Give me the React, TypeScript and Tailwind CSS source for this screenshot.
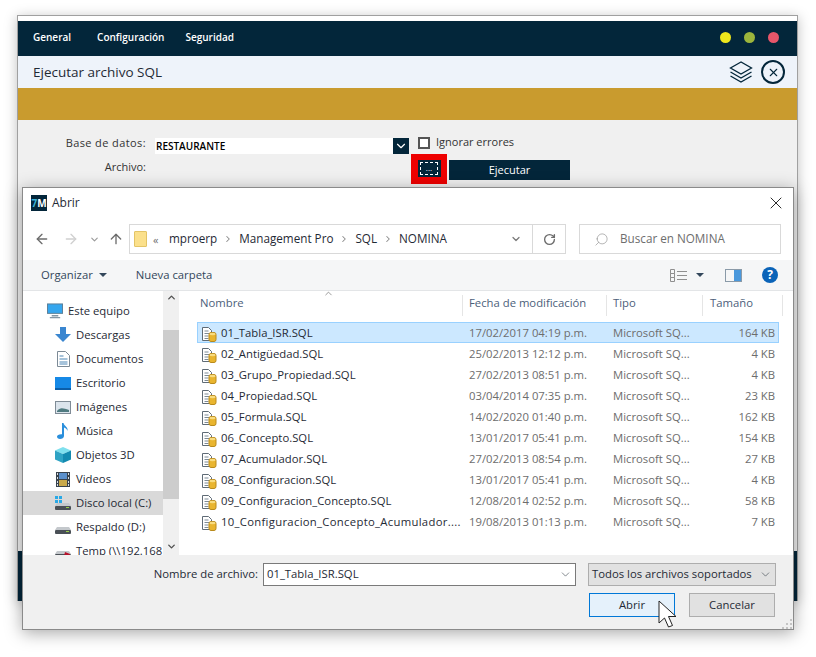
import { ArrowLeft, ArrowRight, ArrowUp, ChevronDown, ChevronRight, ChevronUp, RotateCw, Search, X } from 'lucide-react'

const files = [
  ['01_Tabla_ISR.SQL', '17/02/2017 04:19 p.m.', '164 KB'],
  ['02_Antigüedad.SQL', '25/02/2013 12:12 p.m.', '4 KB'],
  ['03_Grupo_Propiedad.SQL', '27/02/2013 08:51 p.m.', '4 KB'],
  ['04_Propiedad.SQL', '03/04/2014 07:35 p.m.', '23 KB'],
  ['05_Formula.SQL', '14/02/2020 01:40 p.m.', '162 KB'],
  ['06_Concepto.SQL', '13/01/2017 05:41 p.m.', '154 KB'],
  ['07_Acumulador.SQL', '27/02/2013 08:54 p.m.', '27 KB'],
  ['08_Configuracion.SQL', '13/01/2017 05:41 p.m.', '4 KB'],
  ['09_Configuracion_Concepto.SQL', '12/08/2014 02:52 p.m.', '58 KB'],
  ['10_Configuracion_Concepto_Acumulador....', '19/08/2013 01:13 p.m.', '7 KB'],
]

function SqlIcon() {
  return (
    <svg width="16" height="16" viewBox="0 0 16 16" className="shrink-0">
      <path d="M1.5 1.5h6l3 3v10h-9z" fill="#fff" stroke="#5f6b76" />
      <path d="M3.5 5h4M3.5 7.5h5M3.5 10h4M3.5 12.5h4" stroke="#7d8a96" />
      <rect x="8" y="6.500" width="7" height="9" rx="2" fill="#e9b52f" stroke="#b98a1c" />
      <ellipse cx="11.5" cy="8" rx="3" ry="1.300" fill="#f8dc80" />
    </svg>
  )
}

function NavIcon({ name }: { name: string }) {
  if (name === 'pc')
    return (
      <svg width="17" height="16" viewBox="0 0 17 16">
        <rect x="0.5" y="0.5" width="16" height="10" fill="#35a6ee" stroke="#5a7d95" />
        <path d="M5 13h7M3 15h11" stroke="#8497a5" strokeWidth="1.5" />
      </svg>
    )
  if (name === 'down')
    return (
      <svg width="16" height="16" viewBox="0 0 16 16">
        <path d="M5 0h6v7h5l-8 8-8-8h5z" fill="#3a86d0" />
      </svg>
    )
  if (name === 'doc')
    return (
      <svg width="13" height="16" viewBox="0 0 13 16">
        <path d="M0.500 0.500h8l4 4v11h-12z" fill="#fff" stroke="#7c8a96" />
        <path d="M2.500 5h4M2.500 8h8M2.500 11h8M2.500 13h8" stroke="#4c86b5" />
      </svg>
    )
  if (name === 'desk')
    return (
      <svg width="16" height="13" viewBox="0 0 16 13">
        <rect width="16" height="12" fill="#1689e6" />
        <rect y="11" width="16" height="2" fill="#0b5ea8" />
      </svg>
    )
  if (name === 'img')
    return (
      <svg width="16" height="13" viewBox="0 0 16 13">
        <rect x="0.5" y="0.5" width="15" height="12" fill="#dbe4ec" stroke="#7f8b96" />
        <path d="M2 10c3-4 6-3 12-1v2H2z" fill="#4f7a80" />
      </svg>
    )
  if (name === 'music')
    return (
      <svg width="12" height="16" viewBox="0 0 12 16">
        <path d="M5 0h1.500c.5 3 5 4 4 8-.5-2-2-3-3.500-3.500V13c0 2-2 3-4 3s-3-1-3-2.500S2 11 5 11.200z" fill="#2a8fdc" />
      </svg>
    )
  if (name === 'cube')
    return (
      <svg width="16" height="16" viewBox="0 0 16 16">
        <path d="M8 0l8 3.500-8 3.500-8-3.500z" fill="#7fe0ee" />
        <path d="M0 3.500l8 3.500v9l-8-3.500z" fill="#2ea3c4" />
        <path d="M16 3.500l-8 3.500v9l8-3.500z" fill="#138ab0" />
      </svg>
    )
  if (name === 'film')
    return (
      <svg width="14" height="15" viewBox="0 0 14 15">
        <rect width="14" height="15" fill="#38424c" />
        <path d="M1 1h1v2H1zM1 5h1v2H1zM1 9h1v2H1zM1 12h1v2H1zM12 1h1v2h-1zM12 5h1v2h-1zM12 9h1v2h-1zM12 12h1v2h-1z" fill="#d8dde2" />
        <rect x="3" y="1" width="8" height="6" fill="#5b90cc" />
        <rect x="3" y="8" width="8" height="6" fill="#c9a94a" />
      </svg>
    )
  return (
    <svg width="16" height="16" viewBox="0 0 16 16">
      {name === 'c' && <path d="M0 1h3v3H0zM4 1h3v3H4zM0 5h3v3H0zM4 5h3v3H4z" fill="#29a9e6" />}
      <path d="M2 8h12l2 3H0z" fill="#c4c8cc" />
      <rect y="11" width="16" height="4" rx="1" fill="#4a5056" />
      <rect x="11" y="12" width="3" height="1" fill="#9ad04a" />
      {name === 'net' && <path d="M10 9l5 2-1 4-5-2z" fill="#b8122c" />}
    </svg>
  )
}

const places = [
  ['pc', 'Este equipo'],
  ['down', 'Descargas'],
  ['doc', 'Documentos'],
  ['desk', 'Escritorio'],
  ['img', 'Imágenes'],
  ['music', 'Música'],
  ['cube', 'Objetos 3D'],
  ['film', 'Videos'],
  ['c', 'Disco local (C:)'],
  ['disk', 'Respaldo (D:)'],
  ['net', 'Temp (\\\\192.168'],
]

function OpenDialog() {
  return (
    <div className="absolute left-[22px] top-[187px] w-[772px] h-[443px] flex flex-col bg-white border border-[#8a8a8a] shadow-[0_3px_16px_rgba(0,0,0,0.35)] text-[11.3px] text-[#1f2a35] font-['Open_Sans',sans-serif]">
      <div className="h-[30px] shrink-0 flex items-center pl-[8px] pr-[7px] text-[12px]">
        <div className="w-[16px] h-[16px] bg-[#03263a] text-white text-[10px] leading-[16px] text-center font-bold whitespace-nowrap overflow-hidden">
          <span className="text-[#3bb3d8]">7</span>M
        </div>
        <span className="ml-[5px]">Abrir</span>
        <X size={20} strokeWidth={1} className="ml-auto text-black" />
      </div>
      <div className="h-[42px] shrink-0 flex items-center pl-[11px] pr-[12px]">
        <ArrowLeft size={16} className="text-[#6c6c6c]" />
        <ArrowRight size={16} className="ml-[13px] text-[#d0d0d0]" />
        <ChevronDown size={11} strokeWidth={2.5} className="ml-[10px] text-[#9a9a9a]" />
        <ArrowUp size={16} className="ml-[8px] text-[#6c6c6c]" />
        <div className="ml-[5px] w-[437px] h-[30px] flex items-center border border-[#d9d9d9] text-[11.7px]">
          <div className="ml-[4px] w-[13px] h-[16px] bg-[#fbe08b] border border-[#e3c466] rounded-[1px]" />
          <span className="ml-[6px] w-[9px] text-[#6d6d6d] text-[11px] leading-none">«</span>
          <span className="ml-[7px]">mproerp</span>
          <ChevronRight size={10} strokeWidth={2.5} className="mx-[6px] text-[#8a8a8a]" />
          <span>Management Pro</span>
          <ChevronRight size={10} strokeWidth={2.5} className="mx-[6px] text-[#8a8a8a]" />
          <span>SQL</span>
          <ChevronRight size={10} strokeWidth={2.5} className="mx-[6px] text-[#8a8a8a]" />
          <span>NOMINA</span>
          <ChevronDown size={12} strokeWidth={2.5} className="ml-auto mr-[10px] text-[#7a7a7a]" />
          <div className="w-[33px] h-full flex items-center justify-center border-l border-[#d9d9d9]">
            <RotateCw size={13} strokeWidth={2.5} className="text-[#6c6c6c]" />
          </div>
        </div>
        <div className="ml-[13px] flex-1 h-[30px] flex items-center border border-[#d9d9d9] text-[#6d6d6d] text-[11.7px]">
          <Search size={15} strokeWidth={1} className="ml-[14px] -scale-x-100 text-[#8a8a8a]" />
          <span className="ml-[11px]">Buscar en NOMINA</span>
        </div>
      </div>
      <div className="h-[31px] shrink-0 flex items-center bg-[#f5f6f7] border-b border-[#e3e5e7] pl-[18px] pr-[15px] text-[#33475b]">
        <span>Organizar</span>
        <span className="ml-[6px] w-0 h-0 border-x-[4px] border-x-transparent border-t-[4px] border-t-[#33475b]" />
        <span className="ml-[29px]">Nueva carpeta</span>
        <svg width="17" height="13" viewBox="0 0 17 13" fill="none" stroke="#8f8f8f" className="ml-auto">
          <path d="M0.500 0.500h4v4h-4zM0.500 4.500h4v4h-4zM0.500 8.500h4v4h-4zM7 2.500h10M7 6.500h10M7 10.500h10" />
        </svg>
        <span className="ml-[9px] w-0 h-0 border-x-[4px] border-x-transparent border-t-[4px] border-t-[#33475b]" />
        <div className="ml-[21px] w-[17px] h-[13px] border border-[#8a9aa8] flex justify-end">
          <span className="w-[7px] bg-[#4a98dc]" />
        </div>
        <div className="ml-[20px] w-[16px] h-[16px] rounded-full bg-[#0a63b8] text-white text-[12px] leading-[16px] text-center font-bold">?</div>
      </div>
      <div className="flex-1 flex min-h-0">
        <div className="w-[140px] shrink-0 overflow-hidden pt-[8px]">
          {places.map(([icon, label], i) => (
            <div key={label} className={`h-[24px] flex items-center whitespace-nowrap ${i === 0 ? 'pl-[24px]' : 'pl-[32px]'} ${label === 'Disco local (C:)' ? 'bg-[#d9d9d9]' : ''}`}>
              <span className="w-[16px] flex justify-center"><NavIcon name={icon} /></span>
              <span className="ml-[5px]">{label}</span>
            </div>
          ))}
        </div>
        <div className="w-[16px] shrink-0 flex flex-col items-center justify-between bg-[#f0f0f0] text-[#505050] relative">
          <ChevronUp size={11} strokeWidth={3} className="mt-[1px]" />
          <div className="absolute left-0 top-[39px] w-full h-[169px] bg-[#cdcdcd]" />
          <ChevronDown size={11} strokeWidth={3} className="mb-[3px]" />
        </div>
        <div className="flex-1 min-w-0 pl-[18px] relative">
          <ChevronUp size={11} strokeWidth={1.500} className="absolute left-[144px] top-[-3px] text-[#6d6d6d]" />
          <div className="h-[25px] grid grid-cols-[266px_144px_96px_80px] text-[#4c607a] pt-[4px]">
            <span className="pl-[3px] border-r border-[#e5e5e5]">Nombre</span>
            <span className="pl-[6px] border-r border-[#e5e5e5]">Fecha de modificación</span>
            <span className="pl-[6px] border-r border-[#e5e5e5]">Tipo</span>
            <span className="pl-[7px] border-r border-[#e5e5e5]">Tamaño</span>
          </div>
          <div className="mt-[6px] w-[582px]">
            {files.map(([name, date, size], i) => (
              <div key={name} className={`h-[21px] pt-[2px] grid grid-cols-[271px_144px_118px_47px] items-center border ${i === 0 ? 'bg-[#cce8ff] border-[#99d1ff]' : 'border-transparent'}`}>
                <span className="flex items-center pl-[3px] whitespace-nowrap overflow-hidden">
                  <SqlIcon />
                  <span className={i === 9 ? 'ml-[4px] tracking-[0.3px]' : 'ml-[4px]'}>{name}</span>
                </span>
                <span className="text-[#6d6d6d] whitespace-nowrap">{date}</span>
                <span className="text-[#6d6d6d] whitespace-nowrap">Microsoft SQ...</span>
                <span className="text-[#6d6d6d] text-right pr-[3px] whitespace-nowrap">{size}</span>
              </div>
            ))}
          </div>
        </div>
      </div>
      <div className="h-[74px] shrink-0 bg-[#f0f0f0] relative pt-[8px] pr-[17px]">
        <div className="flex items-center justify-end h-[23px]">
          <span className="mr-[5px]">Nombre de archivo:</span>
          <div className="w-[313px] h-[23px] flex items-center bg-white border border-[#7a7a7a] pl-[3px]">
            01_Tabla_ISR.SQL
            <ChevronDown size={13} strokeWidth={1} className="ml-auto mr-[3px]" />
          </div>
          <div className="ml-[12px] w-[188px] h-[23px] flex items-center bg-[#e1e1e1] border border-[#adadad] pl-[3px] whitespace-nowrap">
            Todos los archivos soportados
            <ChevronDown size={13} strokeWidth={1} className="ml-auto mr-[3px]" />
          </div>
        </div>
        <div className="mt-[7px] flex justify-end gap-[14px] pr-[1px]">
          <button className="w-[86px] h-[24px] bg-[#e5f1fb] border border-[#0078d7]">Abrir</button>
          <button className="w-[86px] h-[24px] bg-[#e1e1e1] border border-[#adadad]">Cancelar</button>
        </div>
        <svg width="22" height="32" viewBox="0 0 22 32" className="absolute left-[635px] top-[45px]">
          <path d="M1 1v22l5.500-5 4 9 4-1.500-4-9h7.500z" fill="#fff" stroke="#222" strokeWidth="1" />
        </svg>
        <svg width="12" height="12" viewBox="0 0 12 12" className="absolute right-0 bottom-0">
          <path d="M9 2h2v2H9zM5 6h2v2H5zM9 6h2v2H9zM1 10h2v2H1zM5 10h2v2H5zM9 10h2v2H9z" fill="#c4c4c4" />
        </svg>
      </div>
    </div>
  )
}

export default function App() {
  return (
    <div className="relative w-[816px] h-[657px] bg-white overflow-hidden pt-[15px] pl-[17px] font-['Open_Sans',sans-serif]">
      <div className="w-[781px] h-[586px] flex flex-col bg-[#f0f0f0] border-x border-t border-[#a0a0a0] shadow-[0_2px_12px_rgba(0,0,0,0.25)]">
        <div className="h-[5px] bg-white shrink-0" />
        <div className="h-[35px] shrink-0 flex items-center bg-[#03263a] text-white text-[10px] font-semibold pl-[15px] pr-[18px] pb-[3px]">
          <span>General</span>
          <span className="ml-[26px]">Configuración</span>
          <span className="ml-[21px]">Seguridad</span>
          <div className="ml-auto flex gap-[13px]">
            <span className="w-[11px] h-[11px] rounded-full bg-[#efe71c]" />
            <span className="w-[11px] h-[11px] rounded-full bg-[#9cb53c]" />
            <span className="w-[11px] h-[11px] rounded-full bg-[#e8566a]" />
          </div>
        </div>
        <div className="h-[32px] shrink-0 flex items-center bg-[#eef3fa] pl-[15px] pr-[12px] text-[13.5px] text-[#1f2a35]">
          <span>Ejecutar archivo SQL</span>
          <svg width="24" height="24" viewBox="0 0 24 24" fill="none" stroke="#03263a" strokeWidth="1.3" className="ml-auto">
            <path d="M12 2L1.500 8 12 14l10.500-6zM1.500 12L12 18l10.500-6M1.500 16L12 22l10.500-6" />
          </svg>
          <div className="ml-[8px] w-[24px] h-[24px] rounded-full border-2 border-[#03263a] flex items-center justify-center">
            <X size={13} strokeWidth={2} className="text-[#03263a]" />
          </div>
        </div>
        <div className="h-[32px] shrink-0 bg-[#c99b2e]" />
        <div className="flex-1 min-h-0 pt-[16px] text-[11px] text-[#333]">
          <div className="flex items-center h-[20px]">
            <span className="w-[128px] text-right tracking-[0.4px] -mt-[6px]">Base de datos:</span>
            <div className="ml-[9px] w-[238px] h-[16px] bg-white text-[10px] font-semibold text-black pl-[1px] flex items-center">RESTAURANTE</div>
            <div className="w-[16px] h-[16px] bg-[#03263a] flex items-center justify-center">
              <ChevronDown size={14} className="text-white" />
            </div>
            <span className="ml-[9px] w-[12px] h-[12px] border-2 border-[#555] bg-white -mt-[7px]" />
            <span className="ml-[6px] -mt-[7px]">Ignorar errores</span>
          </div>
          <div className="flex h-[30px] mt-[-2px]">
            <span className="w-[128px] text-right pt-[5px]">Archivo:</span>
            <div className="ml-[265px] w-[36px] h-[30px] bg-[#ee0000] flex items-center justify-center pb-[1px]">
              <div className="w-[23px] h-[17px] bg-[#03263a] flex items-center justify-center">
                <span className="w-[18px] h-[13px] border border-dashed border-white text-white text-[8px] leading-[9px] text-center">...</span>
              </div>
            </div>
            <button className="ml-[2px] mt-[6px] w-[121px] h-[20px] bg-[#03263a] text-white text-[11px]">Ejecutar</button>
          </div>
        </div>
        <div className="h-[50px] shrink-0 bg-[#03263a]" />
      </div>
      <OpenDialog />
    </div>
  )
}
